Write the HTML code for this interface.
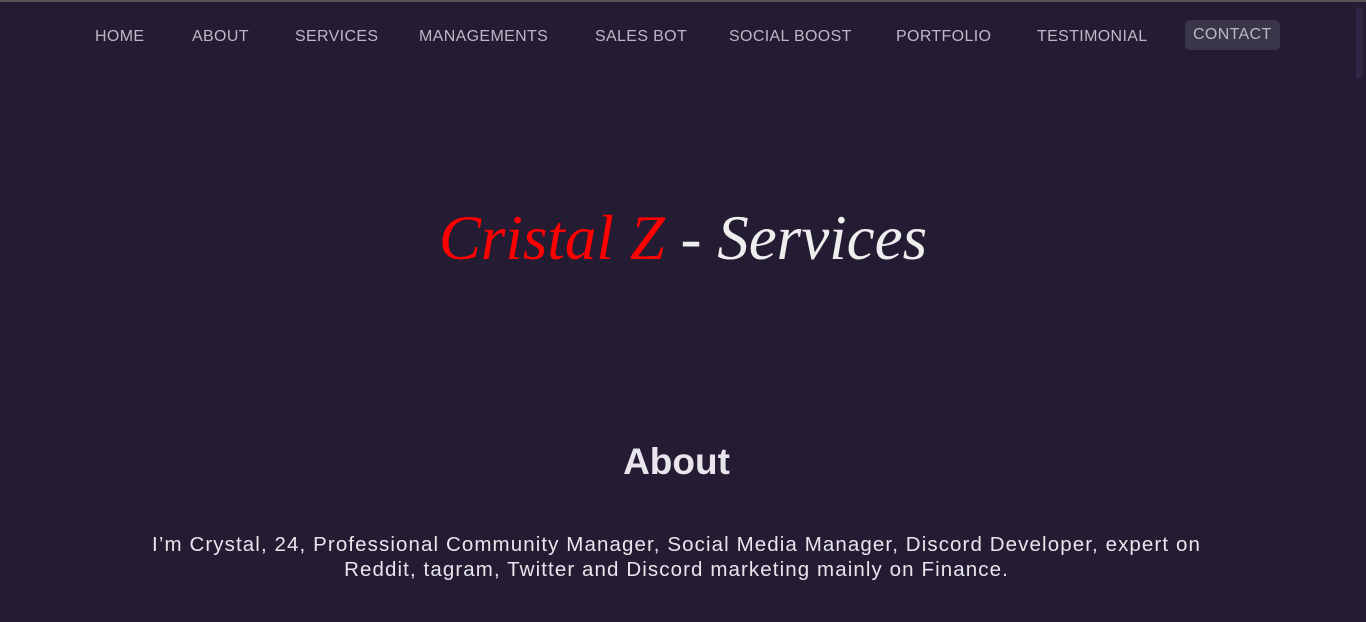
<!DOCTYPE html>
<html><head><meta charset="utf-8"><style>
html,body{margin:0;padding:0;}
body{width:1366px;height:622px;background:#231c33;overflow:hidden;position:relative;font-family:"Liberation Sans",sans-serif;border-top:2px solid #555;box-sizing:border-box;}
.nav a{position:absolute;top:26px;font-size:16px;color:#bdb8c6;text-decoration:none;letter-spacing:0.35px;white-space:nowrap;line-height:18px;}
.contact{background:#3b3549;border-radius:5px;padding:6px 8px;top:18px!important;}
.sb{position:absolute;right:3px;top:5px;width:7px;height:72px;background:#2f2845;border-radius:3px;}
.title{position:absolute;left:0;width:1366px;text-align:center;top:200px;font-family:"Liberation Serif",serif;font-style:italic;font-size:63px;color:#eee;white-space:nowrap;}
.title span{color:#ff0000;}
h2{position:absolute;margin:0;top:439px;left:0;width:1353px;text-align:center;font-size:37px;font-weight:bold;color:#e8e6ec;}
p{position:absolute;margin:0;top:530px;left:0;width:1353px;text-align:center;font-size:20.5px;line-height:25px;color:#e8e6ec;letter-spacing:1.1px;white-space:nowrap;}
</style></head><body>
<div class="nav">
<a style="left:95px">HOME</a>
<a style="left:192px">ABOUT</a>
<a style="left:295px">SERVICES</a>
<a style="left:419px">MANAGEMENTS</a>
<a style="left:595px">SALES BOT</a>
<a style="left:729px">SOCIAL BOOST</a>
<a style="left:896px">PORTFOLIO</a>
<a style="left:1037px">TESTIMONIAL</a>
<a class="contact" style="left:1185px">CONTACT</a>
</div>
<div class="sb"></div>
<div class="title"><span>Cristal Z</span> - Services</div>
<h2>About</h2>
<p>I’m Crystal, 24, Professional Community Manager, Social Media Manager, Discord Developer, expert on<br>Reddit, tagram, Twitter and Discord marketing mainly on Finance.</p>
</body></html>
